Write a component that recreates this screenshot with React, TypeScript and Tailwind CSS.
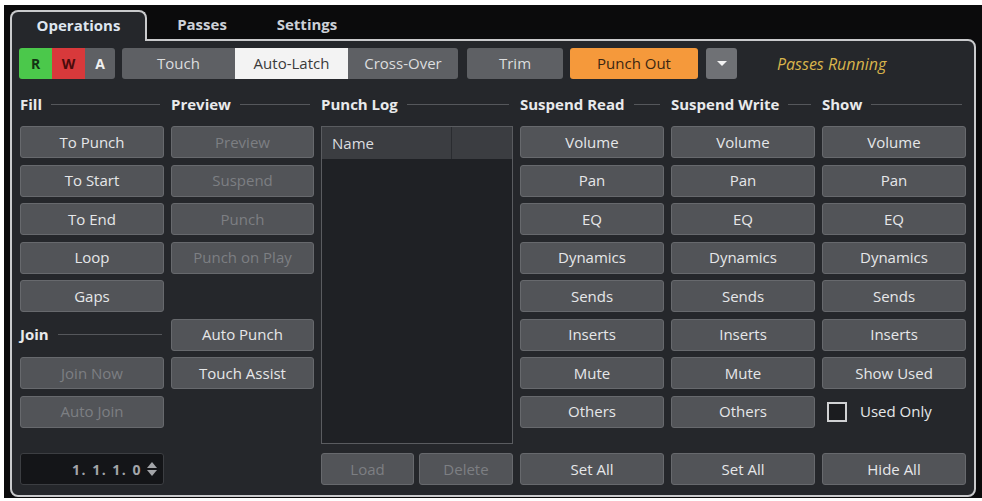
import type { FC, ReactNode } from 'react';

const font = { fontFamily: '"Open Sans", "Noto Sans", "Liberation Sans", sans-serif' };

interface BtnProps {
  label: string;
  disabled?: boolean;
  className?: string;
}

// plain grey panel button, dimmed text when disabled
const Btn: FC<BtnProps> = ({ label, disabled, className = '' }) => (
  <div
    className={`h-[32px] shrink-0 flex items-center justify-center rounded-[3px] border border-[#67696d] bg-[#525458] text-[15px] ${
      disabled ? 'text-[#7d7f83]' : 'text-[#e6e7e9]'
    } ${className}`}
  >
    {label}
  </div>
);

const Header: FC<{ title: string }> = ({ title }) => (
  <div className="mt-[14px] mb-[11px] flex h-[22px] items-center">
    <span className="text-[15px] font-bold text-[#e9eaec]">{title}</span>
    <div className="ml-[9px] mr-[4px] h-px flex-1 bg-[#55575b]" />
  </div>
);

const Column: FC<{ title: string; width: string; children: ReactNode }> = ({ title, width, children }) => (
  <div className={`flex flex-col ${width}`}>
    <Header title={title} />
    <div className="flex h-[359px] flex-col gap-[6.5px]">{children}</div>
  </div>
);

const mixerItems = ['Volume', 'Pan', 'EQ', 'Dynamics', 'Sends', 'Inserts', 'Mute', 'Others'];

export default function App() {
  return (
    <div className="h-[501px] w-[982px] bg-white pt-[5px] pb-[3px] pl-[4px]" style={font}>
      <div className="h-full bg-[#0b0b0c] pt-[5px] pl-[6px]">
        {/* tab strip */}
        <div className="flex h-[31px] items-stretch">
          <div className="relative z-10 flex w-[137px] items-center justify-center rounded-t-[8px] border-2 border-b-0 border-[#c9cacc] bg-[#25272b] pb-[2px] text-[15px] font-bold text-[#dfe6f0]">
            Operations
          </div>
          <div className="flex w-[110px] items-center justify-center pb-[2px] text-[15px] font-bold text-[#cdd1d8]">
            Passes
          </div>
          <div className="flex w-[100px] items-center justify-center pb-[2px] text-[15px] font-bold text-[#cdd1d8]">
            Settings
          </div>
        </div>

        {/* main panel */}
        <div className="-mt-[2px] h-[458px] w-[966px] rounded-[8px] rounded-tl-none border-2 border-[#c9cacc] bg-[#25272b] pt-[7px] pl-[7px]">
          {/* automation mode toolbar */}
          <div className="flex h-[31px] items-stretch text-[15px]">
            <div className="flex w-[96px] overflow-hidden rounded-[3px] text-[14px] font-bold">
              <div className="flex w-[33px] items-center justify-center bg-[#4bc84b] text-[#133313]">R</div>
              <div className="flex w-[33px] items-center justify-center bg-[#d8393b] text-[#4a0b0b]">W</div>
              <div className="flex flex-1 items-center justify-center bg-[#5e6064] text-[#f0f0f0]">A</div>
            </div>
            <div className="ml-[7px] flex w-[336px] overflow-hidden rounded-[3px] text-[#dcdddf]">
              <div className="flex w-[113px] items-center justify-center bg-[#5e6064]">Touch</div>
              <div className="flex w-[113px] items-center justify-center bg-[#f3f3f3] text-[#3a3a3a]">Auto-Latch</div>
              <div className="flex flex-1 items-center justify-center bg-[#5e6064]">Cross-Over</div>
            </div>
            <div className="ml-[9px] flex w-[96px] items-center justify-center rounded-[3px] bg-[#5e6064] text-[#dcdddf]">
              Trim
            </div>
            <div className="ml-[7px] flex w-[128px] items-center justify-center rounded-[3px] bg-[#f5993b] text-[#3b2612]">
              Punch Out
            </div>
            <div className="ml-[8px] flex w-[31px] items-center justify-center rounded-[3px] bg-[#6f7175]">
              <div className="h-0 w-0 border-x-[5px] border-t-[5px] border-x-transparent border-t-[#f2f2f2]" />
            </div>
            <div className="ml-[40px] flex items-center text-[16px] italic text-[#d8b44c]">Passes Running</div>
          </div>

          <div className="flex gap-[7px] pl-[1px]">
            <Column title="Fill" width="w-[144px]">
              <Btn label="To Punch" />
              <Btn label="To Start" />
              <Btn label="To End" />
              <Btn label="Loop" />
              <Btn label="Gaps" />
              <div className="flex h-[32px] shrink-0 items-center">
                <span className="text-[15px] font-bold text-[#e9eaec]">Join</span>
                <div className="ml-[9px] mr-[2px] h-px flex-1 bg-[#55575b]" />
              </div>
              <Btn label="Join Now" disabled />
              <Btn label="Auto Join" disabled />
              <div className="mt-auto flex h-[32px] shrink-0 items-center justify-end rounded-[3px] border border-[#3c3e42] bg-[#141518] pr-[6px] text-[14px] font-bold text-[#a3a5a9]">
                <span className="tracking-[1.5px]">1. 1. 1. 0</span>
                <div className="ml-[5px] flex flex-col gap-[2px]">
                  <div className="h-0 w-0 border-x-[5px] border-b-[6px] border-x-transparent border-b-[#a3a5a9]" />
                  <div className="h-0 w-0 border-x-[5px] border-t-[6px] border-x-transparent border-t-[#a3a5a9]" />
                </div>
              </div>
            </Column>

            <Column title="Preview" width="w-[143px]">
              <Btn label="Preview" disabled />
              <Btn label="Suspend" disabled />
              <Btn label="Punch" disabled />
              <Btn label="Punch on Play" disabled />
              <div className="h-[32px] shrink-0" />
              <Btn label="Auto Punch" />
              <Btn label="Touch Assist" />
            </Column>

            <Column title="Punch Log" width="w-[192px]">
              <div className="flex h-[318px] shrink-0 flex-col border border-[#5a5c60] bg-[#1f2125]">
                <div className="flex h-[32px] bg-[#3b3d41] text-[15px] text-[#dcdde0]">
                  <div className="flex w-[130px] items-center border-r border-[#2a2c30] pl-[10px]">Name</div>
                  <div className="flex-1" />
                </div>
              </div>
              <div className="mt-auto flex gap-[5px]">
                <Btn label="Load" disabled className="w-[93px]" />
                <Btn label="Delete" disabled className="flex-1" />
              </div>
            </Column>

            <Column title="Suspend Read" width="w-[144px]">
              {mixerItems.map((item) => (
                <Btn key={item} label={item} />
              ))}
              <Btn label="Set All" className="mt-auto" />
            </Column>

            <Column title="Suspend Write" width="w-[144px]">
              {mixerItems.map((item) => (
                <Btn key={item} label={item} />
              ))}
              <Btn label="Set All" className="mt-auto" />
            </Column>

            <Column title="Show" width="w-[144px]">
              {mixerItems.slice(0, 6).map((item) => (
                <Btn key={item} label={item} />
              ))}
              <Btn label="Show Used" />
              <div className="flex h-[32px] shrink-0 items-center pl-[5px] text-[15px] text-[#e6e7e9]">
                <div className="h-[20px] w-[20px] border-2 border-[#d0d1d3] bg-[#1b1c1f]" />
                <span className="ml-[13px]">Used Only</span>
              </div>
              <Btn label="Hide All" className="mt-auto" />
            </Column>
          </div>
        </div>
      </div>
    </div>
  );
}
